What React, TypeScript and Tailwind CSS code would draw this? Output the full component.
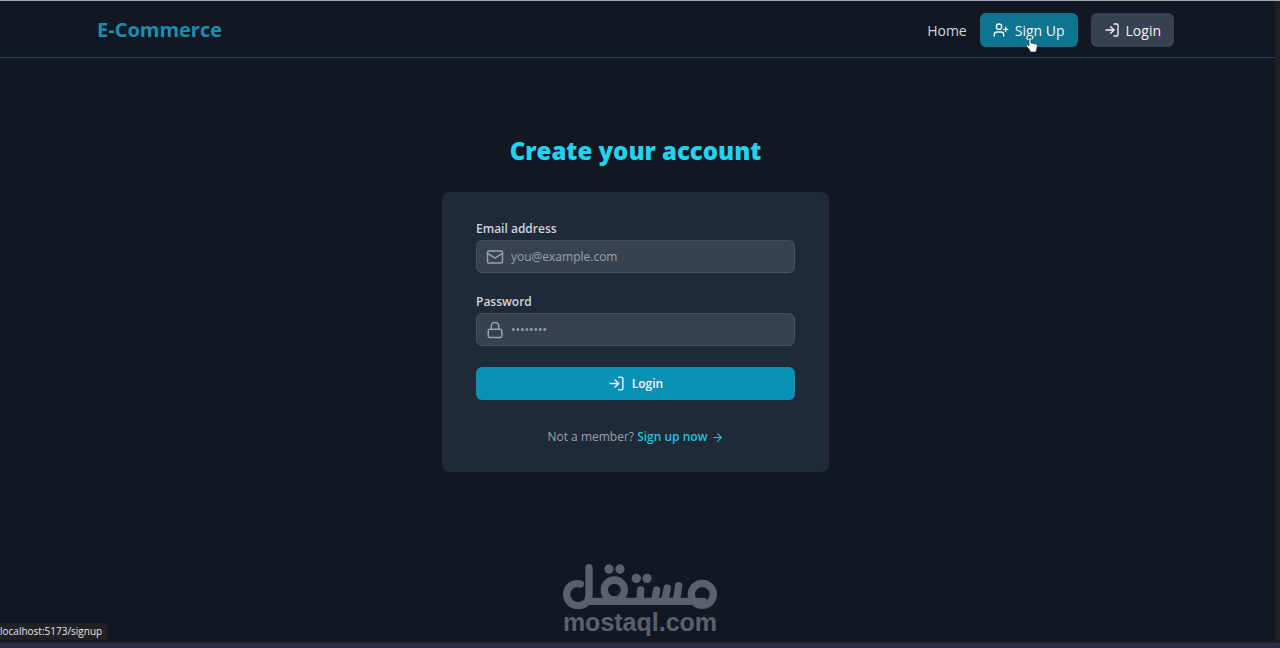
import { useState } from "react";
import type { ReactNode } from "react";
import { ArrowRight, Lock, LogIn, Mail, UserPlus } from "lucide-react";

function Field({
  id,
  label,
  type,
  placeholder,
  icon,
}: {
  id: string;
  label: string;
  type: string;
  placeholder: string;
  icon: ReactNode;
}) {
  const [value, setValue] = useState("");

  return (
    <div>
      <label
        htmlFor={id}
        className="block text-[12px] leading-4 font-semibold text-gray-300"
      >
        {label}
      </label>
      <div className="relative mt-[3px]">
        <div className="pointer-events-none absolute inset-y-0 left-0 flex items-center pl-[10px] text-gray-400">
          {icon}
        </div>
        <input
          id={id}
          type={type}
          value={value}
          onChange={(e) => setValue(e.target.value)}
          placeholder={placeholder}
          className="block h-[33px] w-full rounded-md border border-[#454f5f] bg-[#384150] pl-[34px] pr-3 text-[12px] text-white placeholder-gray-400 focus:outline-none"
        />
      </div>
    </div>
  );
}

function Navbar() {
  return (
    <header className="border-b border-[#1c4557]">
      <div className="mr-1 flex justify-center">
        <div className="flex w-full max-w-[1077px] items-center justify-between pt-3 pb-[10px]">
          <a
            href="/"
            className="text-[20px] leading-[34px] font-bold text-[#1a8fad]"
          >
            E-Commerce
          </a>
          <nav className="flex items-center gap-[13px] text-[14px]">
            <a href="/" className="text-gray-300">
              Home
            </a>
            <a
              href="/signup"
              className="flex h-[34px] items-center gap-[6px] rounded-md bg-[#0e7490] px-[13px] text-gray-100"
            >
              <UserPlus size={16} />
              Sign Up
            </a>
            <a
              href="/login"
              className="flex h-[34px] items-center gap-[6px] rounded-md bg-[#374151] px-[13px] text-gray-100"
            >
              <LogIn size={16} />
              Login
            </a>
          </nav>
        </div>
      </div>
    </header>
  );
}

function Watermark() {
  return (
    <div className="pointer-events-none absolute bottom-[14px] left-1/2 flex -translate-x-1/2 flex-col items-center text-[#5b616b]">
      <svg
        width="156"
        height="48"
        viewBox="0 0 468 144"
        fill="none"
        stroke="currentColor"
        strokeWidth="22"
        strokeLinecap="round"
        role="img"
        aria-label="مستقل"
      >
        <path d="M55 66C31 60 14 77 14 97C14 118 30 131 49 131C68 131 81 117 81 97V17" />
        <path d="M80 118H424" />
        <circle cx="157" cy="84" r="30" />
        <circle cx="421" cy="97" r="33" />
        <path d="M236 84L234 117M284 84L278 117M316 78L308 117M350 71L343 117" />
        <g fill="currentColor" stroke="none">
          <circle cx="141" cy="21" r="14" />
          <circle cx="174" cy="21" r="14" />
          <circle cx="223" cy="49" r="14" />
          <circle cx="255" cy="49" r="14" />
        </g>
      </svg>
      <span className="font-['Liberation_Sans',sans-serif] text-[25px] leading-6 font-bold">
        mostaql.com
      </span>
    </div>
  );
}

function PointerCursor() {
  return (
    <svg
      className="pointer-events-none absolute top-[36px] left-[1026px]"
      width="12"
      height="16"
      viewBox="0 0 12 16"
      fill="white"
      stroke="#1f2937"
      strokeWidth="0.6"
      aria-hidden="true"
    >
      <path d="M3 1.4C3 .4 4.9.4 4.9 1.4V6l5 1.1c1 .2 1.5.9 1.4 1.9L10.700 12 9.700 15H4.500L3.500 12.700.700 9.300C0 8.200 1.300 7.300 2.100 8L3 9Z" />
    </svg>
  );
}

export default function App() {
  return (
    <div className="relative flex min-h-screen flex-col border-t border-[#a5a9ac] bg-[#1f2026] font-['Open_Sans',sans-serif]">
      <div className="mr-[5px] flex grow flex-col bg-[#111824]">
        <Navbar />
        <main className="mr-1 flex flex-col items-center px-4 pt-[77px] pb-24">
          <h1 className="text-[24px] leading-8 font-extrabold text-[#22d3ee]">
            Create your account
          </h1>
          <section className="mt-[25px] w-full max-w-[387px] rounded-lg bg-[#1f2937] px-[34px] pt-[29px] pb-[25px]">
            <form
              className="space-y-[21px]"
              onSubmit={(e) => e.preventDefault()}
            >
              <Field
                id="email"
                label="Email address"
                type="email"
                placeholder="you@example.com"
                icon={<Mail size={18} strokeWidth={2} />}
              />
              <Field
                id="password"
                label="Password"
                type="password"
                placeholder="••••••••"
                icon={<Lock size={18} strokeWidth={2} />}
              />
              <button
                type="submit"
                className="flex h-[33px] w-full items-center justify-center gap-[7px] rounded-md bg-[#0891b2] text-[12px] font-semibold text-gray-100"
              >
                <LogIn size={17} />
                Login
              </button>
            </form>
            <p className="mt-[27px] text-center text-[12px] leading-5 text-gray-400">
              Not a member?{" "}
              <a href="/signup" className="font-semibold text-[#22c3dc]">
                Sign up now <ArrowRight className="inline" size={13} />
              </a>
            </p>
          </section>
        </main>
      </div>
      <div className="mt-[2px] h-[5px] bg-[#2e2a4e]" />
      <div className="absolute bottom-[8px] left-0 rounded-tr bg-[#202124] pr-[5px] text-[10px] leading-[17px] text-gray-200">
        localhost:5173/signup
      </div>
      <Watermark />
      <PointerCursor />
    </div>
  );
}
